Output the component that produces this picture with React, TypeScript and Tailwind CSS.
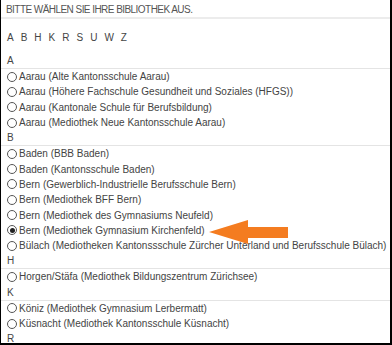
import React from "react";

type Row = { type: "h"; label: string } | { type: "i"; label: string; checked?: boolean };

const rows: Row[] = [
  { type: "h", label: "A" },
  { type: "i", label: "Aarau (Alte Kantonsschule Aarau)" },
  { type: "i", label: "Aarau (Höhere Fachschule Gesundheit und Soziales (HFGS))" },
  { type: "i", label: "Aarau (Kantonale Schule für Berufsbildung)" },
  { type: "i", label: "Aarau (Mediothek Neue Kantonsschule Aarau)" },
  { type: "h", label: "B" },
  { type: "i", label: "Baden (BBB Baden)" },
  { type: "i", label: "Baden (Kantonsschule Baden)" },
  { type: "i", label: "Bern (Gewerblich-Industrielle Berufsschule Bern)" },
  { type: "i", label: "Bern (Mediothek BFF Bern)" },
  { type: "i", label: "Bern (Mediothek des Gymnasiums Neufeld)" },
  { type: "i", label: "Bern (Mediothek Gymnasium Kirchenfeld)", checked: true },
  { type: "i", label: "Bülach (Mediotheken Kantonssschule Zürcher Unterland und Berufsschule Bülach)" },
  { type: "h", label: "H" },
  { type: "i", label: "Horgen/Stäfa (Mediothek Bildungszentrum Zürichsee)" },
  { type: "h", label: "K" },
  { type: "i", label: "Köniz (Mediothek Gymnasium Lerbermatt)" },
  { type: "i", label: "Küsnacht (Mediothek Kantonsschule Küsnacht)" },
  { type: "h", label: "R" },
];

const letters = ["A", "B", "H", "K", "R", "S", "U", "W", "Z"];

export default function App() {
  return (
    <div
      className="relative w-[392px] h-[345px] overflow-hidden bg-white border-l border-r-2 border-b-2 border-black text-[10px] text-[#444]"
      style={{ fontFamily: '"Liberation Sans", Arial, sans-serif' }}
    >
      <div className="pl-[5px] pt-[4px] pb-[1px] leading-[12px] border-b-2 border-[#ececec] text-[#555] tracking-[-0.55px]">
        BITTE WÄHLEN SIE IHRE BIBLIOTHEK AUS.
      </div>
      <div className="mt-[11px] pl-[6px] flex gap-[7px] leading-[15px]">
        {letters.map((l) => (
          <span key={l}>{l}</span>
        ))}
      </div>
      <div className="mt-[8px]">
        {rows.map((r, i) =>
          r.type === "h" ? (
            <div key={i} className="pl-[6px] leading-[15px] border-b border-[#e4e4e4]">
              {r.label}
            </div>
          ) : (
            <label key={i} className="flex items-center pl-[6px] h-[15.3px] whitespace-nowrap">
              <span className="w-[10px] h-[10px] rounded-full border border-[#555] mr-[2px] flex items-center justify-center shrink-0 bg-white">
                {r.checked ? <span className="w-[5px] h-[5px] rounded-full bg-[#222]" /> : null}
              </span>
              <span>{r.label}</span>
            </label>
          )
        )}
      </div>
      <svg className="absolute left-0 top-0" width="392" height="345" viewBox="0 0 392 345">
        <polygon
          points="208,232 247,220 247,227 287,227 287,238 247,238 247,244"
          fill="#f47c20"
        />
      </svg>
    </div>
  );
}
